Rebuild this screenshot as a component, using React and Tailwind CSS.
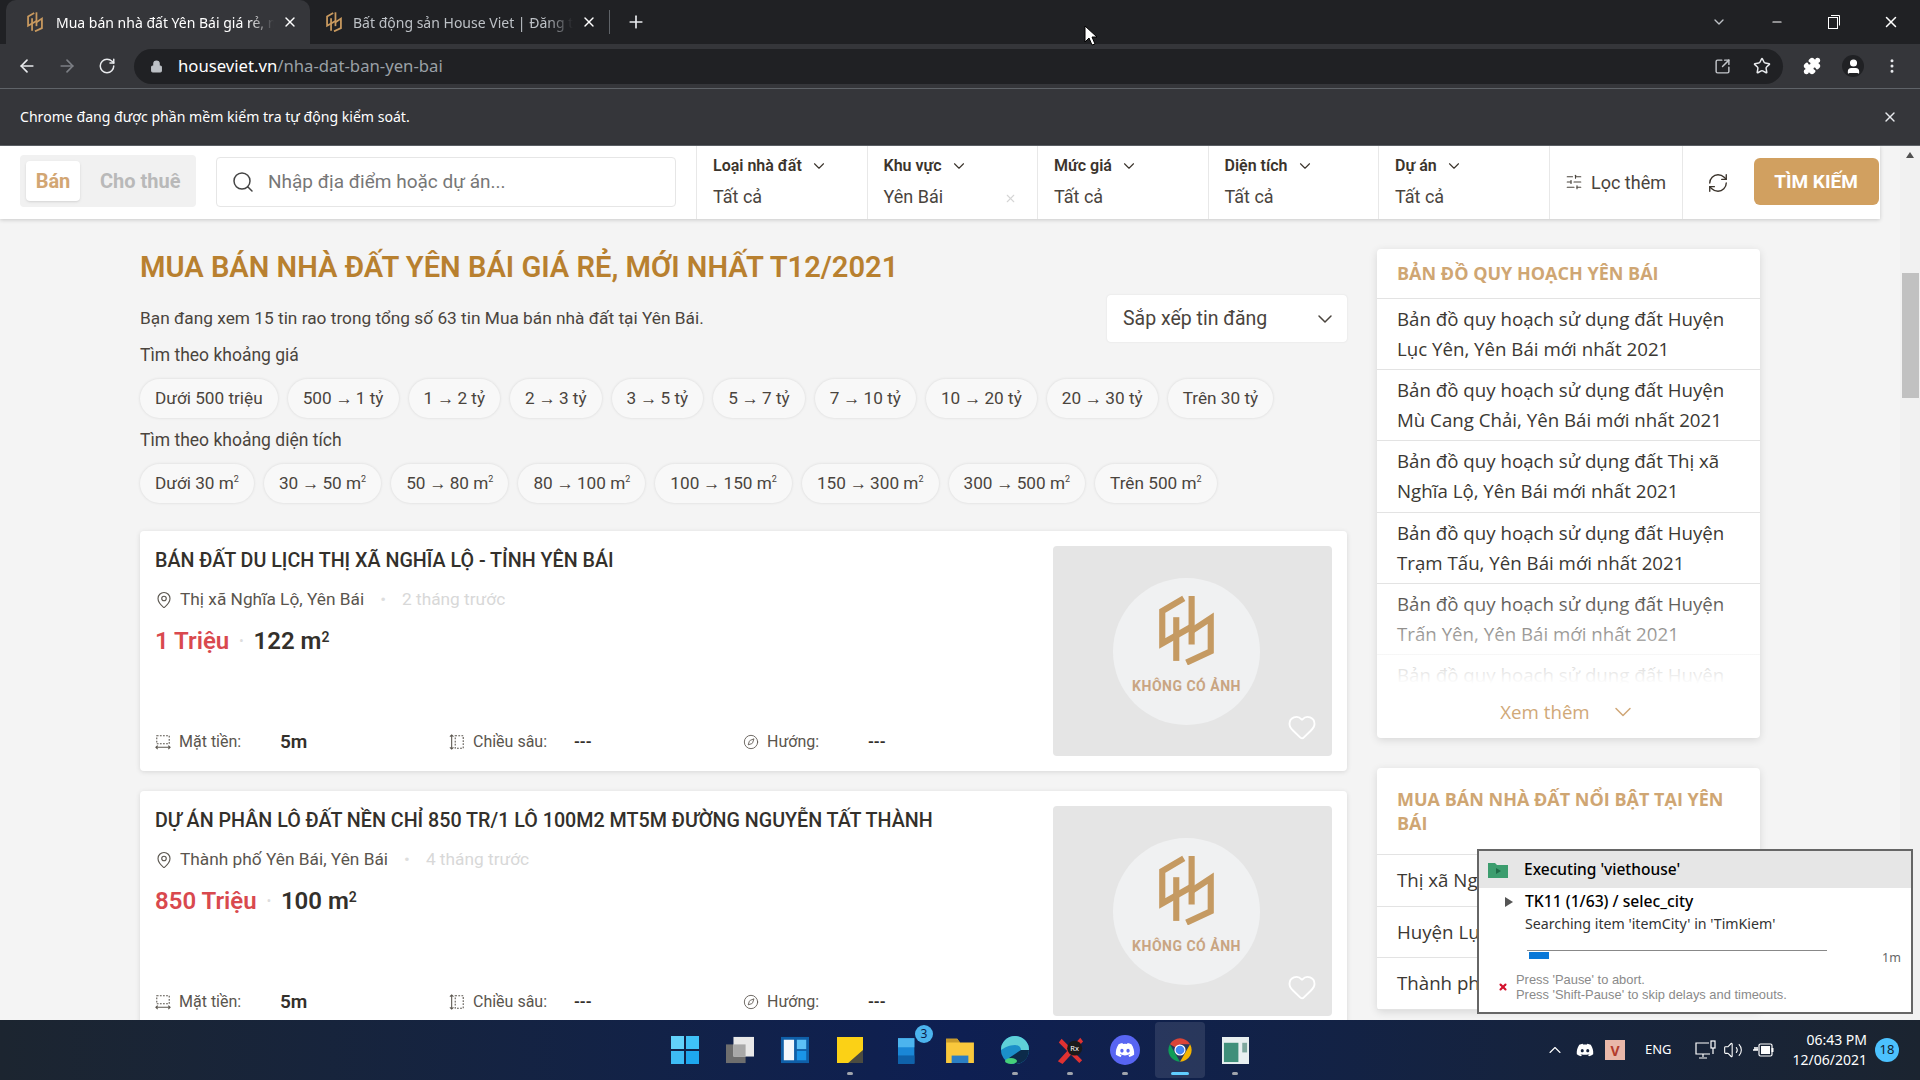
import { ArrowLeft, ArrowRight, RotateCw, Lock, SquareArrowOutUpRight, Star, Puzzle, User, EllipsisVertical, X, Plus, ChevronDown, Minus, Search, SlidersHorizontal, RefreshCw, MapPin, Heart, Compass, ChevronUp, Volume2 } from 'lucide-react';
import { FaDiscord } from 'react-icons/fa';

const PRICE_CHIPS = ['Dưới 500 triệu', '500\u2009→\u20091 tỷ', '1\u2009→\u20092 tỷ', '2\u2009→\u20093 tỷ', '3\u2009→\u20095 tỷ', '5\u2009→\u20097 tỷ', '7\u2009→\u200910 tỷ', '10\u2009→\u200920 tỷ', '20\u2009→\u200930 tỷ', 'Trên 30 tỷ'];
const AREA_CHIPS = ['Dưới 30', '30\u2009→\u200950', '50\u2009→\u200980', '80\u2009→\u2009100', '100\u2009→\u2009150', '150\u2009→\u2009300', '300\u2009→\u2009500', 'Trên 500'];

const FILTERS = [
    { label: 'Loại nhà đất', value: 'Tất cả' },
    { label: 'Khu vực', value: 'Yên Bái', clear: true },
    { label: 'Mức giá', value: 'Tất cả' },
    { label: 'Diện tích', value: 'Tất cả' },
    { label: 'Dự án', value: 'Tất cả' },
];

const PLANS = [
    ['Bản đồ quy hoạch sử dụng đất Huyện', 'Lục Yên, Yên Bái mới nhất 2021'],
    ['Bản đồ quy hoạch sử dụng đất Huyện', 'Mù Cang Chải, Yên Bái mới nhất 2021'],
    ['Bản đồ quy hoạch sử dụng đất Thị xã', 'Nghĩa Lộ, Yên Bái mới nhất 2021'],
    ['Bản đồ quy hoạch sử dụng đất Huyện', 'Trạm Tấu, Yên Bái mới nhất 2021'],
    ['Bản đồ quy hoạch sử dụng đất Huyện', 'Trấn Yên, Yên Bái mới nhất 2021'],
];

const LISTINGS = [
    { title: 'BÁN ĐẤT DU LỊCH THỊ XÃ NGHĨA LỘ - TỈNH YÊN BÁI', place: 'Thị xã Nghĩa Lộ, Yên Bái', time: '2 tháng trước', price: '1 Triệu', area: '122' },
    { title: 'DỰ ÁN PHÂN LÔ ĐẤT NỀN CHỈ 850 TR/1 LÔ 100M2 MT5M ĐƯỜNG NGUYỄN TẤT THÀNH', place: 'Thành phố Yên Bái, Yên Bái', time: '4 tháng trước', price: '850 Triệu', area: '100' },
];

function Logo({ className }) {
    return (
        <svg viewBox="0 0 160 205" className={className} fill="none" stroke="currentColor" strokeWidth="18">
            <path d="M72 10 9 47v95l91-52" />
            <path d="M50 65v128" />
            <path d="M95 3v142" />
            <path d="M95 105l56-37v97l-71 33" />
        </svg>
    );
}

function Tab({ title, active }) {
    return (
        <div className={`flex h-[44px] items-center pr-[12px] ${active ? 'w-[304px] rounded-t-[10px] bg-[#35363a] pl-[21px] text-white' : 'w-[299px] pl-[16px] text-[#bdc1c6]'}`}>
            <Logo className="h-[20px] w-[16px] shrink-0 text-[#c99a5f]" />
            <span className={`flex-1 overflow-hidden whitespace-nowrap text-[14px] [mask-image:linear-gradient(to_right,black_88%,transparent)] ${active ? 'ml-[13px]' : 'ml-[11px]'}`}>{title}</span>
            <X className="ml-[8px] h-[16px] w-[16px] shrink-0 text-white" />
        </div>
    );
}

function BrowserChrome() {
    return (
        <div className="shrink-0 font-['Noto_Sans',sans-serif]">
            <div className="flex h-[44px] items-center bg-[#202124] pl-[6px] text-[#bdc1c6]">
                <Tab title="Mua bán nhà đất Yên Bái giá rẻ, mới" active />
                <Tab title="Bất động sản House Viet | Đăng tin" />
                <div className="h-[24px] w-px bg-[#5f6368]" />
                <Plus className="ml-[16px] h-[20px] w-[20px] text-[#e8eaed]" />
                <div className="flex-1" />
                <ChevronDown className="mr-[43px] h-[16px] w-[16px]" />
                <Minus className="mr-[44px] h-[14px] w-[14px] text-white" />
                <svg viewBox="0 0 12 14" className="mr-[42px] h-[14px] w-[12px] text-white" fill="none" stroke="currentColor">
                    <rect x="0.5" y="2.5" width="9" height="11" />
                    <path d="M3 .5h8.5v10" />
                </svg>
                <X className="mr-[20px] h-[18px] w-[18px] text-white" />
            </div>
            <div className="flex h-[44px] items-center bg-[#35363a] pl-[17px] pr-[19px] text-[#e8eaed]">
                <ArrowLeft className="h-[20px] w-[20px]" />
                <ArrowRight className="ml-[20px] h-[20px] w-[20px] text-[#7c7f85]" />
                <RotateCw className="ml-[21px] h-[18px] w-[18px]" />
                <div className="ml-[18px] flex h-[35px] flex-1 items-center rounded-full bg-[#202124] pl-[16px] pr-[12px]">
                    <Lock className="h-[13px] w-[13px] fill-[#bdc1c6] text-[#bdc1c6]" />
                    <span className="ml-[15px] text-[16.7px] text-white">houseviet.vn<span className="text-[#9aa0a6]">/nha-dat-ban-yen-bai</span></span>
                    <div className="flex-1" />
                    <SquareArrowOutUpRight className="h-[17px] w-[17px] text-[#c4c7cc]" />
                    <Star className="ml-[22px] h-[18px] w-[18px]" />
                </div>
                <Puzzle className="ml-[20px] h-[18px] w-[18px] fill-white text-white" />
                <div className="ml-[21px] flex h-[22px] w-[22px] items-center justify-center rounded-full bg-[#202124]">
                    <User className="h-[17px] w-[17px] fill-white text-white" />
                </div>
                <EllipsisVertical className="ml-[19px] h-[18px] w-[18px]" />
            </div>
            <div className="flex h-[58px] items-center border-y border-[#5f6368] bg-[#35363a] pl-[20px] pr-[22px] text-[14.1px] text-white">
                <span className="flex-1">Chrome đang được phần mềm kiểm tra tự động kiểm soát.</span>
                <X className="h-[16px] w-[16px] text-[#e8eaed]" />
            </div>
        </div>
    );
}

function FilterBar() {
    return (
        <div className="flex h-[73px] shrink-0 items-stretch bg-white pl-[20px] shadow-[0_1px_4px_rgba(0,0,0,0.18)]">
            <div className="mt-[9px] flex h-[52px] w-[176px] items-center rounded-[4px] bg-[#f1f1f1] pl-[6px] text-[20px] font-bold">
                <div className="flex h-[40px] w-[54px] items-center justify-center rounded-[4px] bg-white text-[#d2a673] shadow-sm">Bán</div>
                <span className="ml-[20px] text-[#b9b9b9]">Cho thuê</span>
            </div>
            <div className="ml-[20px] mt-[11px] flex h-[50px] w-[460px] items-center rounded-[4px] border border-[#e6e6e6] pl-[14px] text-[19px] text-[#777]">
                <Search className="h-[24px] w-[24px] text-[#444]" strokeWidth={1.5} />
                <span className="ml-[13px]">Nhập địa điểm hoặc dự án...</span>
            </div>
            <div className="ml-[20px] flex">
                {FILTERS.map((f) => (
                    <div key={f.label} className="relative w-[170.5px] border-l border-[#e8e8e8] pl-[16px] pt-[8px]">
                        <div className="flex items-center text-[16px] font-semibold text-[#3b342c]">
                            {f.label}
                            <ChevronDown className="ml-[8px] h-[18px] w-[18px]" strokeWidth={1.5} />
                        </div>
                        <div className="mt-[5px] text-[18px] text-[#4a443d]">{f.value}</div>
                        {f.clear && <X className="absolute bottom-[14px] right-[20px] h-[13px] w-[13px] text-[#d5d5d5]" />}
                    </div>
                ))}
            </div>
            <div className="flex w-[133px] items-center justify-center border-l border-[#e8e8e8] pb-[1px] text-[18px] text-[#4a443d]">
                <SlidersHorizontal className="mr-[8px] h-[18px] w-[18px]" strokeWidth={1.5} />
                Lọc thêm
            </div>
            <div className="flex w-[72px] items-center justify-center border-l border-[#e8e8e8] text-[#3b342c]">
                <RefreshCw className="h-[22px] w-[22px]" strokeWidth={1.5} />
            </div>
            <div className="mt-[12px] flex h-[47px] w-[125px] items-center justify-center rounded-[6px] bg-[#d1a060] pt-[1px] text-[19px] font-bold text-white">TÌM KIẾM</div>
        </div>
    );
}

function Chip({ children }) {
    return <div className="flex h-[39px] items-center whitespace-nowrap rounded-full bg-[#f8f8f8] px-[15px] text-[17.2px] text-[#4a443d] shadow-[0_0_3px_rgba(0,0,0,0.12)]">{children}</div>;
}

function FrontageIcon({ className }) {
    return (
        <svg viewBox="0 0 18 18" className={className} fill="none" stroke="currentColor" strokeWidth="1.2">
            <rect x="2" y="2" width="14" height="9" strokeDasharray="2 1.5" />
            <path d="M1 15h16M3 13l-2 2 2 2M15 13l2 2-2 2" />
        </svg>
    );
}

function DepthIcon({ className }) {
    return (
        <svg viewBox="0 0 18 18" className={className} fill="none" stroke="currentColor" strokeWidth="1.2">
            <rect x="7" y="2" width="9" height="14" strokeDasharray="2 1.5" />
            <path d="M3 1v16M1 3l2-2 2 2M1 15l2 2 2-2" />
        </svg>
    );
}

function ListingCard({ item }) {
    return (
        <div className="flex h-[240px] shrink-0 rounded-[4px] bg-white p-[15px] shadow-[0_1px_5px_rgba(0,0,0,0.12)]">
            <div className="flex flex-1 flex-col pt-[1px] text-[#33302b]">
                <div className="text-[19.7px] font-medium leading-[28px]">{item.title}</div>
                <div className="mt-[12px] flex items-center text-[17.3px] text-[#5a554e]">
                    <MapPin className="h-[18px] w-[18px]" strokeWidth={1.5} />
                    <span className="ml-[7px]">{item.place}</span>
                    <span className="ml-[16px] text-[#dddddd]">•</span>
                    <span className="ml-[16px] text-[#d8d8d8]">{item.time}</span>
                </div>
                <div className="mt-[12px] flex items-center text-[24px] font-semibold leading-[32px]">
                    <span className="text-[#d9494e]">{item.price}</span>
                    <span className="mx-[10px] text-[12px] text-[#ddd]">•</span>
                    <span>{item.area} m<sup className="text-[14px]">2</sup></span>
                </div>
                <div className="mt-auto flex items-center text-[16px] text-[#5a554e]">
                    <div className="flex w-[294px] items-center">
                        <FrontageIcon className="h-[16px] w-[16px]" />
                        <span className="ml-[8px] w-[101px]">Mặt tiền:</span>
                        <span className="text-[19px] font-semibold text-[#33302b]">5m</span>
                    </div>
                    <div className="flex w-[294px] items-center">
                        <DepthIcon className="h-[16px] w-[16px]" />
                        <span className="ml-[8px] w-[101px]">Chiều sâu:</span>
                        <span className="font-semibold text-[#33302b]">---</span>
                    </div>
                    <div className="flex items-center">
                        <Compass className="h-[16px] w-[16px]" strokeWidth={1.3} />
                        <span className="ml-[8px] w-[101px]">Hướng:</span>
                        <span className="font-semibold text-[#33302b]">---</span>
                    </div>
                </div>
            </div>
            <div className="relative flex h-[210px] w-[279px] shrink-0 flex-col items-center justify-center rounded-[4px] bg-[#e5e5e5]">
                <div className="mr-[12px] flex h-[147px] w-[147px] flex-col items-center rounded-full bg-[#f0f1f2] pt-[17px]">
                    <Logo className="h-[70px] w-[55px] text-[#c59a62]" />
                    <span className="mt-[11px] text-[14px] font-bold tracking-[0.5px] text-[#c9a582]">KHÔNG CÓ ẢNH</span>
                </div>
                <Heart className="absolute bottom-[14px] right-[15px] h-[30px] w-[30px] text-white" strokeWidth={1.5} />
            </div>
        </div>
    );
}

function Sidebar() {
    return (
        <div className="flex w-[383px] shrink-0 flex-col gap-[30px] font-['Open_Sans',sans-serif]">
            <div className="h-[489px] shrink-0 rounded-[4px] bg-white shadow-[0_2px_8px_rgba(0,0,0,0.12)]">
                <div className="flex h-[50px] items-center border-b border-[#e3e3e3] px-[20px] text-[18px] font-bold text-[#cfa673]">BẢN ĐỒ QUY HOẠCH YÊN BÁI</div>
                <div className="relative h-[385px] overflow-hidden">
                    {PLANS.map((lines, i) => (
                        <div key={i} className="h-[71.2px] border-b border-[#e3e3e3] px-[20px] pt-[5px] text-[18.7px] leading-[30px] text-[#3b3833]">
                            <div className="whitespace-nowrap">{lines[0]}</div>
                            <div className="whitespace-nowrap">{lines[1]}</div>
                        </div>
                    ))}
                    <div className="px-[20px] pt-[5px] text-[18.7px] leading-[30px] text-[#3b3833]">Bản đồ quy hoạch sử dụng đất Huyện</div>
                    <div className="absolute inset-x-0 bottom-0 h-[100px] bg-gradient-to-b from-white/0 to-white" />
                </div>
                <div className="mt-[14px] flex items-center justify-center text-[18.7px] text-[#d0a878]">
                    Xem thêm
                    <ChevronDown className="ml-[19px] h-[28px] w-[28px]" strokeWidth={1.3} />
                </div>
            </div>
            <div className="shrink-0 rounded-[4px] bg-white shadow-[0_2px_8px_rgba(0,0,0,0.12)]">
                <div className="border-b border-[#e3e3e3] px-[20px] pb-[19px] pt-[19px] text-[18px] font-bold leading-[24px] text-[#cfa673]">MUA BÁN NHÀ ĐẤT NỔI BẬT TẠI YÊN BÁI</div>
                {['Thị xã Nghĩa Lộ', 'Huyện Lục Yên', 'Thành phố Yên Bái'].map((name) => (
                    <div key={name} className="flex h-[51.5px] items-center border-b border-[#e3e3e3] px-[20px] text-[18.7px] text-[#3b3833]">{name}</div>
                ))}
            </div>
        </div>
    );
}

function ExecPopup() {
    return (
        <div className="absolute bottom-[66px] right-[7px] h-[165px] w-[436px] border-[2.5px] border-[#666] bg-white font-['Noto_Sans',sans-serif] text-black">
            <div className="flex h-[37px] items-center bg-[#e6e6e6] pl-[9px] text-[15.5px] font-medium">
                <svg viewBox="0 0 20 16" className="h-[16px] w-[20px]">
                    <path d="M0 1h7l2 2h11v13H0z" fill="#3c9d6e" />
                    <path d="M8 6l5 3-5 3z" fill="#1f6b48" />
                </svg>
                <span className="ml-[16px]">Executing 'viethouse'</span>
            </div>
            <div className="relative pl-[46px] pt-[1px]">
                <span className="absolute left-[26px] top-[9px] h-0 w-0 border-y-[5px] border-l-[8px] border-y-transparent border-l-[#555]" />
                <div className="text-[15.7px] font-medium leading-[24px]">TK11 (1/63) / selec_city</div>
                <div className="mt-[1px] text-[14.2px] leading-[20px] text-[#333]">Searching item 'itemCity' in 'TimKiem'</div>
                <div className="ml-[2px] mt-[16px] flex items-start">
                    <div className="h-[9px] w-[300px] border-t border-[#888]">
                        <div className="ml-[2px] mt-[1px] h-[7px] w-[20px] bg-[#0a78d7]" />
                    </div>
                    <span className="ml-[55px] mt-[-1px] text-[12.5px] text-[#666]">1m</span>
                </div>
            </div>
            <div className="flex items-center pl-[19px] pt-[4px] font-['Liberation_Sans',sans-serif]">
                <X className="h-[10px] w-[10px] text-[#d4122e]" strokeWidth={5} />
                <div className="ml-[8px] text-[12.9px] leading-[15px] text-[#8a8a8a]">
                    <div>Press 'Pause' to abort.</div>
                    <div>Press 'Shift-Pause' to skip delays and timeouts.</div>
                </div>
            </div>
        </div>
    );
}

function TaskIcon({ children, dot, active }) {
    return (
        <div className={`relative flex h-[56px] w-[50px] items-center justify-center rounded-[4px] ${active ? 'bg-white/10' : ''}`}>
            {children}
            {dot && <span className={`absolute bottom-[3px] h-[3px] rounded-full ${active ? 'w-[18px] bg-[#60cdff]' : 'w-[6px] bg-[#a0a4ac]'}`} />}
        </div>
    );
}

function Taskbar() {
    return (
        <div className="flex h-[60px] shrink-0 items-center bg-gradient-to-r from-[#1c2530] via-[#0e1f52] to-[#1b2430] font-['Noto_Sans',sans-serif] text-white">
            <div className="ml-[660px] flex items-center gap-[5px]">
                <TaskIcon>
                    <div className="grid h-[28px] w-[28px] grid-cols-2 gap-[2px]">
                        <span className="bg-[#62d2fb]" /><span className="bg-[#3fc1f7]" /><span className="bg-[#3ebcf5]" /><span className="bg-[#1ea7ee]" />
                    </div>
                </TaskIcon>
                <TaskIcon>
                    <svg viewBox="0 0 30 30" className="h-[28px] w-[28px]"><rect x="0" y="9" width="21" height="20" fill="#6e6e6e" /><rect x="8" y="1" width="22" height="21" fill="#e8e8e8" /><rect x="8" y="9" width="13" height="13" fill="#a8a8a8" /></svg>
                </TaskIcon>
                <TaskIcon>
                    <svg viewBox="0 0 30 30" className="h-[28px] w-[28px]"><rect x="0" y="1" width="30" height="28" fill="#0f5fa8" /><rect x="3" y="4" width="11" height="22" fill="#f2f6fb" /><rect x="17" y="4" width="10" height="10" fill="#5cc0f5" /><rect x="17" y="16" width="10" height="10" fill="#1a95e8" /></svg>
                </TaskIcon>
                <TaskIcon dot>
                    <svg viewBox="0 0 28 30" className="h-[28px] w-[26px]"><path d="M0 1h28v28H0z" fill="#fbd116" /><path d="M28 15v14H12z" fill="#4b4b40" /></svg>
                </TaskIcon>
                <div className="relative">
                    <TaskIcon>
                        <svg viewBox="0 0 22 30" className="ml-[6px] h-[30px] w-[20px]"><path d="M0 2h18v28H0z" fill="#1a87d6" /><path d="M0 2h18v10H0z" fill="#4cb4ee" /><path d="M0 21h18v9H0z" fill="#0f62aa" /></svg>
                    </TaskIcon>
                    <span className="absolute right-[-3px] top-[3px] flex h-[18px] w-[18px] items-center justify-center rounded-full bg-[#4cb4ee] text-[12px] text-[#0b1d4a]">3</span>
                </div>
                <TaskIcon>
                    <svg viewBox="0 0 30 28" className="h-[26px] w-[30px]"><path d="M0 2h12l3 4h15v22H0z" fill="#f9c83c" /><path d="M0 2h12l3 4H0z" fill="#c89a2a" /><rect x="6" y="20" width="18" height="8" fill="#2b7fc4" /></svg>
                </TaskIcon>
                <TaskIcon dot>
                    <svg viewBox="0 0 30 30" className="h-[30px] w-[30px]"><circle cx="15" cy="15" r="14" fill="#1b8fc9" /><path d="M15 1a14 14 0 0 1 14 14c0 5-8 4-8 0 0-3-3-5-6-5-6 0-11 3-14 5A14 14 0 0 1 15 1z" fill="#5fd0d8" /><path d="M29 15c0 8-6 14-14 14l-6-6 12-8z" fill="#0c2b4a" /><ellipse cx="11" cy="26" rx="6" ry="3" fill="#45d07a" /></svg>
                </TaskIcon>
                <TaskIcon dot>
                    <svg viewBox="0 0 30 30" className="h-[28px] w-[28px]"><path d="M6 3l10 10L26 2l3 4-10 11 9 9-3 3-9-9-9 10-5-3 10-11L3 7z" fill="#e03232" /><circle cx="20" cy="13" r="8" fill="#1a1a1a" /><text x="20" y="16" textAnchor="middle" fontSize="8" fill="#fff" fontFamily="Noto Sans">Rx</text></svg>
                </TaskIcon>
                <TaskIcon dot>
                    <div className="flex h-[30px] w-[30px] items-center justify-center rounded-full bg-[#5865f2]">
                        <FaDiscord className="h-[20px] w-[20px] text-white" />
                    </div>
                </TaskIcon>
                <TaskIcon dot active>
                    <svg viewBox="0 0 48 48" className="h-[28px] w-[28px]">
                        <path d="M24 24 6.7 14A20 20 0 0 1 41.3 14H24z" fill="#db4437" />
                        <path d="M24 44A20 20 0 0 1 6.7 14L17 32z" fill="#0f9d58" />
                        <path d="M41.3 14A20 20 0 0 1 24 44L34 27z" fill="#f4b400" />
                        <circle cx="24" cy="24" r="9.5" fill="#fff" /><circle cx="24" cy="24" r="7.5" fill="#4285f4" />
                    </svg>
                </TaskIcon>
                <TaskIcon dot>
                    <svg viewBox="0 0 28 28" className="h-[27px] w-[27px]"><rect width="28" height="28" fill="#e8eff0" /><rect x="2" y="6" width="15" height="20" fill="#3f8f7a" /><rect x="21" y="6" width="5" height="10" fill="#7fa89e" /></svg>
                </TaskIcon>
            </div>
            <div className="flex-1" />
            <ChevronUp className="h-[20px] w-[20px]" strokeWidth={1.3} />
            <FaDiscord className="ml-[11px] h-[18px] w-[18px]" />
            <span className="ml-[11px] flex h-[20px] w-[20px] items-center justify-center bg-[#e9b7a9] text-[14px] font-bold text-[#b33a2b]">V</span>
            <span className="ml-[20px] text-[13px]">ENG</span>
            <svg viewBox="0 0 22 20" className="ml-[23px] h-[20px] w-[22px]" fill="none" stroke="currentColor" strokeWidth="1.2">
                <path d="M14 3H1v11h14M8 14v3M4 18h8" />
                <rect x="16" y="1" width="4" height="7" />
                <path d="M18 8v6" />
            </svg>
            <Volume2 className="ml-[6px] h-[20px] w-[20px]" strokeWidth={1.3} />
            <svg viewBox="0 0 22 16" className="ml-[10px] h-[16px] w-[22px]" fill="none" stroke="currentColor" strokeWidth="1.2">
                <rect x="6" y="2" width="13" height="12" rx="1.5" />
                <rect x="8" y="4" width="9" height="8" fill="currentColor" stroke="none" />
                <path d="M19.5 6v4" strokeWidth="2" />
                <path d="M0 8h5M2 5v3M4 5v3" strokeWidth="1.6" />
            </svg>
            <div className="ml-[18px] text-right text-[14px] leading-[20px]">
                <div>06:43 PM</div>
                <div>12/06/2021</div>
            </div>
            <span className="ml-[8px] mr-[21px] flex h-[24px] w-[24px] items-center justify-center rounded-full bg-[#4cc2ff] text-[13px] text-[#10212e]">18</span>
        </div>
    );
}

export default function App() {
    return (
        <div className="relative flex h-screen w-full flex-col overflow-hidden bg-[#f4f4f4] font-['Roboto',sans-serif]">
            <BrowserChrome />
            <div className="flex min-h-0 flex-1">
                <div className="flex min-w-0 flex-1 flex-col">
                    <div className="w-[1880px]"><FilterBar /></div>
                    <div className="flex gap-[30px] pl-[140px] pt-[25px]">
                        <div className="flex w-[1207px] shrink-0 flex-col">
                            <div className="flex h-[48px] items-center text-[29.1px] font-semibold text-[#b8802f]">MUA BÁN NHÀ ĐẤT YÊN BÁI GIÁ RẺ, MỚI NHẤT T12/2021</div>
                            <div className="mt-[3px] flex h-[47px] items-center justify-between text-[17.3px] text-[#4a443d]">
                                <span className="pt-[1px]">Bạn đang xem 15 tin rao trong tổng số 63 tin Mua bán nhà đất tại Yên Bái.</span>
                                <div className="flex h-[47px] w-[240px] items-center justify-between rounded-[4px] bg-white pl-[16px] pr-[10px] text-[19.5px] shadow-[0_0_2px_rgba(0,0,0,0.1)]">
                                    Sắp xếp tin đăng
                                    <ChevronDown className="h-[24px] w-[24px]" strokeWidth={1.5} />
                                </div>
                            </div>
                            <div className="mt-[1px] text-[17.5px] leading-[24px] text-[#4a443d]">Tìm theo khoảng giá</div>
                            <div className="mt-[12px] flex gap-[10px]">{PRICE_CHIPS.map((c) => <Chip key={c}>{c}</Chip>)}</div>
                            <div className="mt-[10px] text-[17.5px] leading-[24px] text-[#4a443d]">Tìm theo khoảng diện tích</div>
                            <div className="mt-[12px] flex gap-[10px]">
                                {AREA_CHIPS.map((c) => <Chip key={c}>{c} m<sup className="text-[9px]">2</sup></Chip>)}
                            </div>
                            <div className="mt-[28px] flex flex-col gap-[20px]">
                                {LISTINGS.map((item) => <ListingCard key={item.title} item={item} />)}
                            </div>
                        </div>
                        <div className="pt-[5px]"><Sidebar /></div>
                    </div>
                </div>
                <div className="flex w-[20px] shrink-0 flex-col items-center bg-[#f1f1f1] pt-[6px]">
                    <span className="h-0 w-0 border-x-[4px] border-b-[6px] border-x-transparent border-b-[#505050]" />
                    <div className="mt-[115px] h-[125px] w-[17px] bg-[#c1c1c1]" />
                </div>
            </div>
            <Taskbar />
            <ExecPopup />
            <svg viewBox="0 0 14 22" className="absolute left-[1084px] top-[25px] h-[22px] w-[14px]">
                <path d="M1 1v16l4-4 3 7 3-1-3-7h5z" fill="#fff" stroke="#000" />
            </svg>
        </div>
    );
}
